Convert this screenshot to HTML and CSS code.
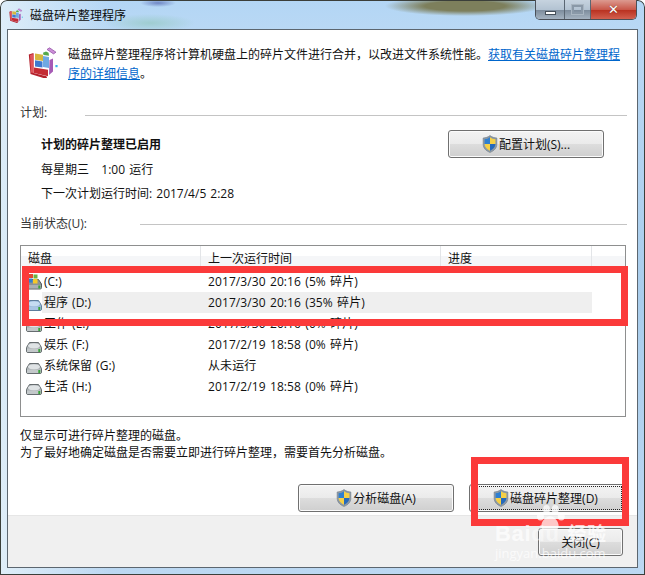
FILE: index.html
```html
<!DOCTYPE html>
<html lang="zh-CN">
<head>
<meta charset="utf-8">
<title>磁盘碎片整理程序</title>
<link rel="stylesheet" href="styles.css">
</head>
<body>
<svg class="defs" width="0" height="0" aria-hidden="true">
  <defs>
    <symbol id="shield" viewBox="0 0 16 18">
      <path d="M8 .6C6 2.2 3.6 2.9 1.2 3v6.2c0 3.9 2.8 6.7 6.8 8.2 4-1.5 6.8-4.300 6.8-8.200V3C12.400 2.900 10 2.200 8 .6z" fill="#8d9aa6" stroke="#77838e" stroke-width=".7"/>
      <path d="M8 2.300V9H2.600V4.300C4.600 4.100 6.400 3.500 8 2.300z" fill="#2f7fd0"/>
      <path d="M8 2.300V9h5.400V4.300C11.400 4.100 9.600 3.500 8 2.300z" fill="#f6d046"/>
      <path d="M2.600 9H8v6.700C4.800 14.400 2.800 12.200 2.600 9z" fill="#f6d046"/>
      <path d="M13.400 9H8v6.700c3.200-1.300 5.200-3.500 5.400-6.700z" fill="#2569bb"/>
    </symbol>
    <symbol id="drive" viewBox="0 0 16 12">
      <path d="M3.500 1.500h9L15.500 6.500v3.500a1.500 1.500 0 0 1-1.500 1.500H2A1.500 1.500 0 0 1 .5 10V6.500z" fill="#a9afb2" stroke="#666c6f"/>
      <ellipse cx="8" cy="4.800" rx="6" ry="2.600" fill="#dfe3e5"/>
      <rect x="1" y="7.500" width="14" height="3.500" fill="#c3c8ca"/>
      <rect x="12.300" y="8" width="2" height="3" fill="#39a539"/>
    </symbol>
    <symbol id="drive-blue" viewBox="0 0 16 12">
      <path d="M3.500 1.500h9L15.500 6.500v3.500a1.500 1.500 0 0 1-1.500 1.500H2A1.500 1.500 0 0 1 .5 10V6.500z" fill="#8fb0d3" stroke="#5e7d9c"/>
      <ellipse cx="8" cy="4.800" rx="6" ry="2.600" fill="#c6dcf2"/>
      <rect x="1" y="7.500" width="14" height="3.500" fill="#a9c5e4"/>
      <rect x="12.300" y="8" width="2" height="3" fill="#39a539"/>
    </symbol>
    <symbol id="drive-system" viewBox="0 0 16 17">
      <path d="M3.500 6.500h9L15.500 11v3.500a1.500 1.500 0 0 1-1.500 1.500H2a1.500 1.500 0 0 1-1.500-1.500V11z" fill="#8b9296" stroke="#565c60"/>
      <rect x="1" y="12" width="14" height="3.500" fill="#a9afb2"/>
      <rect x="12.300" y="12.500" width="2" height="3" fill="#39a539"/>
      <rect x="3" y="1" width="4" height="4" fill="#e2492f"/>
      <rect x="7.500" y="1.500" width="4" height="4" fill="#6cb33f"/>
      <rect x="2.500" y="5.500" width="4" height="4" fill="#2f7fd0"/>
      <rect x="7" y="6" width="4.500" height="4.500" fill="#f6c928"/>
    </symbol>
    <symbol id="defrag" viewBox="0 0 30 31">
      <path d="M.8 7.500 5.500 6v20l13 3.300.5 1.700-2 .5L2.500 27z" fill="#b3202c"/>
      <path d="M2 8 5.500 7v19L3 25.500z" fill="#e0555b"/>
      <path d="M6 20.500l14 2.200v6.500L6 26z" fill="#c42b34"/>
      <path d="M7 6.500l8 1.200v6.300L7 12.800z" fill="#d7b73e"/>
      <path d="M15.500 8l5.500.8-.4-3-2.600-1.300-3 1.200z" fill="#55a84a"/>
      <path d="M7 13.300l7.500 1.200v6L7 19.500z" fill="#3f79cf"/>
      <path d="M15 9l6 .9V21l-6-1z" fill="#6fa9e2"/>
      <path d="M21.500 13 25 11.500v13L21 28z" fill="#a65bb5"/>
      <path d="M19 2.500 21.500.8l6.500 4.400-2.500 1.700z" fill="#cc8fd8" stroke="#8d4aa0" stroke-width=".7"/>
      <rect x="27.400" y="18" width="2.200" height="2.200" fill="#3cb5e8"/>
    </symbol>
  </defs>
</svg>

<div class="window">
  <header class="titlebar">
    <svg class="title-icon"><use href="#defrag"/></svg>
    <span class="title-text">磁盘碎片整理程序</span>
  </header>

  <div class="controls">
    <span class="ctl ctl-min"><i></i></span>
    <span class="ctl ctl-max"><i></i></span>
    <span class="ctl ctl-close">✕</span>
  </div>

  <main class="client">
    <div class="content">
      <section class="intro">
        <svg class="intro-icon"><use href="#defrag"/></svg>
        <p class="intro-text">磁盘碎片整理程序将计算机硬盘上的碎片文件进行合并，以改进文件系统性能。<a href="#">获取有关磁盘碎片整理程序的详细信息</a>。</p>
      </section>

      <div class="group-head group-plan"><span>计划:</span><hr></div>

      <section class="schedule">
        <div class="schedule-lines">
          <strong>计划的碎片整理已启用</strong>
          <span>每星期三&nbsp;&nbsp; 1:00 运行</span>
          <span>下一次计划运行时间: 2017/4/5 2:28</span>
        </div>
        <button class="btn btn-plan" type="button"><svg class="shield"><use href="#shield"/></svg>配置计划(S)...</button>
      </section>

      <div class="group-head group-state"><span>当前状态(U):</span><hr></div>

      <section class="list">
        <div class="list-head">
          <span class="col-disk">磁盘</span>
          <span class="col-time">上一次运行时间</span>
          <span class="col-prog">进度</span>
          <span class="col-rest"></span>
        </div>
        <div class="row"><span class="col-disk"><svg class="drive drive-sys"><use href="#drive-system"/></svg><b>(C:)</b></span><span class="col-time">2017/3/30 20:16 (5% 碎片)</span></div>
        <div class="row row-hot"><span class="col-disk"><svg class="drive"><use href="#drive-blue"/></svg><b>程序 (D:)</b></span><span class="col-time">2017/3/30 20:16 (35% 碎片)</span></div>
        <div class="row"><span class="col-disk"><svg class="drive"><use href="#drive"/></svg><b>工作 (E:)</b></span><span class="col-time">2017/3/30 20:16 (0% 碎片)</span></div>
        <div class="row"><span class="col-disk"><svg class="drive"><use href="#drive"/></svg><b>娱乐 (F:)</b></span><span class="col-time">2017/2/19 18:58 (0% 碎片)</span></div>
        <div class="row"><span class="col-disk"><svg class="drive"><use href="#drive"/></svg><b>系统保留 (G:)</b></span><span class="col-time">从未运行</span></div>
        <div class="row"><span class="col-disk"><svg class="drive"><use href="#drive"/></svg><b>生活 (H:)</b></span><span class="col-time">2017/2/19 18:58 (0% 碎片)</span></div>
      </section>

      <p class="note">仅显示可进行碎片整理的磁盘。<br>为了最好地确定磁盘是否需要立即进行碎片整理，需要首先分析磁盘。</p>

      <div class="actions">
        <button class="btn btn-wide" type="button"><svg class="shield"><use href="#shield"/></svg>分析磁盘(A)</button>
        <button class="btn btn-wide btn-default" type="button"><svg class="shield"><use href="#shield"/></svg>磁盘碎片整理(D)</button>
      </div>
    </div>
    <footer class="footer">
      <button class="btn btn-close" type="button">关闭(C)</button>
    </footer>
  </main>

  <div class="mark mark-list"></div>
  <div class="mark mark-btn"></div>

  <div class="watermark">
    <svg class="paw" viewBox="0 0 36 30"><ellipse cx="7" cy="13" rx="4" ry="5"/><ellipse cx="14" cy="5" rx="4" ry="5"/><ellipse cx="24" cy="5" rx="4" ry="5"/><ellipse cx="31" cy="13" rx="4" ry="5"/><path d="M18 13c-5 0-10 6-10 11 0 6 6 5 10 4 4 1 10 2 10-4 0-5-5-11-10-11z"/></svg>
    <span class="wm-main">Bai<em>du</em> <span class="wm-cn">经验</span></span>
    <span class="wm-sub">jingyan.baidu.com</span>
  </div>
</div>
</body>
</html>
```
FILE: styles.css
```css
* { box-sizing: border-box; }
html, body { margin: 0; padding: 0; }
body {
  width: 645px;
  height: 575px;
  overflow: hidden;
  font-family: "Open Sans", "Noto Sans CJK SC", sans-serif;
  font-size: 12px;
  word-spacing: 1px;
  color: #111;
}
.defs { position: absolute; }

.window {
  position: relative;
  width: 645px;
  height: 575px;
  padding: 0 7px 7px 7px;
  display: flex;
  flex-direction: column;
  border-radius: 7px 7px 0 0;
  box-shadow: inset 0 0 0 1px #3b3f3a;
  background:
    radial-gradient(ellipse 80px 10px at 465px 6px, #7d7f5c 0 50%, rgba(125,127,92,0) 100%),
    radial-gradient(ellipse 18px 4px at 158px 3px, #6f86c4 0, rgba(111,134,196,0) 100%),
    radial-gradient(ellipse 45px 9px at 150px 23px, #9fcdd0 0, rgba(159,205,208,0) 100%),
    linear-gradient(90deg, rgba(235,245,250,.75), rgba(235,245,250,0) 110px),
    linear-gradient(#b3d6f5, #b9d8f4 30px, #a9cdec 300px, #bcd8f2);
}

.titlebar {
  height: 29px;
  flex: none;
  display: flex;
  align-items: center;
  gap: 7px;
  padding: 1px 0 0 2px;
}
.title-icon { width: 14px; height: 15px; }
.title-text { font-size: 12px; color: #0c0c0c; }

.controls {
  position: absolute;
  top: 0;
  right: 8px;
  width: 102px;
  height: 20px;
  display: flex;
  border: 1px solid #4a5058;
  border-top: 0;
  border-radius: 0 0 5px 5px;
  overflow: hidden;
}
.ctl {
  display: flex;
  align-items: center;
  justify-content: center;
  background: linear-gradient(#c6d3df, #b3c3d2 50%, #7c8b9b 52%, #a5b3c1);
}
.ctl-min { width: 29px; border-right: 1px solid #5a6672; }
.ctl-min i { width: 11px; height: 4px; margin-top: 6px; background: #fff; border: 1px solid #454f59; }
.ctl-max { width: 26px; border-right: 1px solid #5a6672; }
.ctl-max i { width: 11px; height: 9px; border: 2px solid #8a99a8; outline: 1px solid #a9b6c2; }
.ctl-close {
  flex: 1;
  color: #fff;
  font: bold 13px "DejaVu Sans", sans-serif;
  text-shadow: 0 0 1px #5a1a12;
  background: linear-gradient(#dc9a90, #c9584a 50%, #b8301f 52%, #d2604f);
}

.client {
  flex: 1;
  display: flex;
  flex-direction: column;
  border: 1px solid #5c666f;
  background: #fff;
}
.content { flex: 1; padding: 15px 10px 0 12px; }

.intro { display: flex; align-items: flex-start; min-height: 38px; }
.intro-icon { width: 30px; height: 31px; margin: 2px 10px 0 8px; flex: none; }
.intro-text { margin: 0; line-height: 19px; width: 556px; }
.intro-text a { color: #0066cc; text-decoration: underline; }

.group-head { display: flex; align-items: center; line-height: 20px; color: #333; }
.group-head hr { flex: 1; margin: 0; border: 0; border-top: 1px solid #c4c4c4; }
.group-plan { margin-top: 20px; }
.group-plan hr { margin: 4px 0 0 38px; }
.group-state { margin-top: 10px; }
.group-state hr { margin-left: 53px; }

.schedule {
  display: flex;
  justify-content: space-between;
  align-items: flex-start;
  padding: 12px 23px 0 21px;
  height: 81px;
}
.schedule-lines { display: flex; flex-direction: column; gap: 5px; line-height: 19.5px; }
.schedule-lines strong { font-weight: 700; }

.btn {
  display: inline-flex;
  align-items: center;
  justify-content: center;
  padding: 0;
  height: 28px;
  font: inherit;
  word-spacing: inherit;
  color: #111;
  border: 1px solid #707070;
  border-radius: 3px;
  box-shadow: inset 0 0 0 1px #fbfbfb;
  background: linear-gradient(#f3f3f3, #ebebeb 48%, #dddddd 50%, #cfcfcf);
}
.btn-plan { width: 156px; margin-top: -5px; }
.shield { width: 16px; height: 18px; margin-right: 1px; }

.list {
  margin: 11px 1px 0 0;
  height: 172px;
  border: 1px solid #8e8f8f;
}
.list-head {
  display: flex;
  height: 20px;
  line-height: 25px;
  background: linear-gradient(#fff, #fff 10px, #f5f6f8 10px);
}
.list-head > span { border-right: 1px solid #e3e5e8; padding-left: 7px; height: 20px; overflow: visible; }
.list-head .col-disk { width: 180px; }
.list-head .col-time { width: 240px; }
.list-head .col-prog { width: 151px; }
.list-head .col-rest { border: 0; }

.row { display: flex; height: 21px; line-height: 21px; margin-left: 5px; width: 566px; }
.row:nth-child(2) { margin-top: 5px; }
.row .col-disk { width: 175px; display: flex; align-items: center; gap: 2px; flex: none; }
.row .col-disk b { font-weight: 400; }
.row .col-time { padding-left: 7px; letter-spacing: .1px; }
.row-hot { background: linear-gradient(90deg, #fff 16px, #efefef 16px); }
.drive { width: 16px; height: 12px; margin-top: 5px; flex: none; }
.drive-sys { height: 17px; margin-top: 0; }

.note { margin: 10px 0 0; line-height: 17px; }

.actions { display: flex; justify-content: flex-end; gap: 15px; margin: 23px 2px 0 0; }
.btn-wide { width: 156px; }
.btn-default { position: relative; padding-right: 3px; }
.btn-default::after {
  content: "";
  position: absolute;
  inset: 1px 2px 1px 2px;
  border: 1px dotted #222;
}

.footer {
  height: 52px;
  flex: none;
  background: #f0f0f0;
  border-top: 1px solid #e6e6e6;
  display: flex;
  justify-content: flex-end;
  padding: 12px 14px 0 0;
}
.btn-close { width: 85px; }

.mark { position: absolute; border: 7px solid #fb3a3a; }
.mark-list { left: 22px; top: 266px; width: 606px; height: 60px; }
.mark-btn { left: 471px; top: 457px; width: 158px; height: 69px; }

.watermark { position: absolute; left: 495px; top: 505px; width: 116px; height: 56px; color: rgba(255,255,255,.72); pointer-events: none; }
.paw { position: absolute; left: 38px; top: 0; width: 34px; height: 26px; fill: rgba(255,255,255,.72); }
.wm-main { position: absolute; left: 0; top: 17px; height: 24px; font: bold 22px/24px "Liberation Sans", "Noto Sans CJK SC", sans-serif; letter-spacing: .7px; white-space: nowrap; }
.wm-main em { font-style: normal; color: rgba(255,255,255,.45); }
.wm-cn { font-size: 19px; font-weight: 700; }
.wm-sub { position: absolute; left: 0; top: 41px; font: 13px/15px "Open Sans", sans-serif; white-space: nowrap; }
```
